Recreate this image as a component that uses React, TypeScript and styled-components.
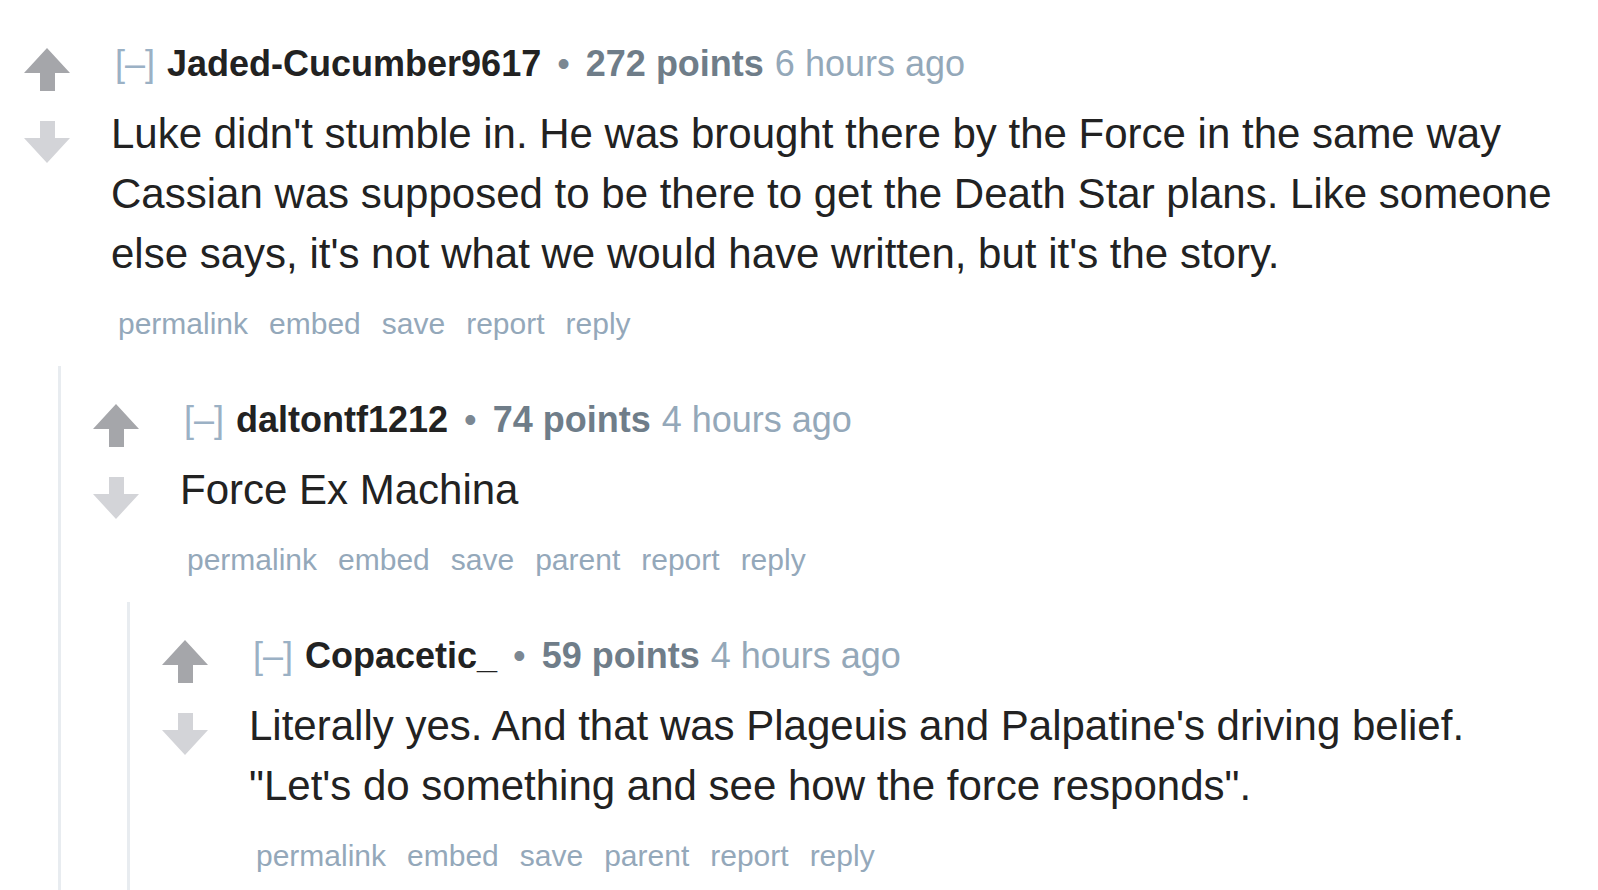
import React from 'react';
import styled, { createGlobalStyle } from 'styled-components';

type CommentData = {
  id: string;
  author: string;
  points: number;
  time: string;
  body: string;
  actions: Array<string>;
  replies?: Array<CommentData>;
};

const comments: Array<CommentData> = [
  {
    id: 'c1',
    author: 'Jaded-Cucumber9617',
    points: 272,
    time: '6 hours ago',
    body: "Luke didn't stumble in. He was brought there by the Force in the same way Cassian was supposed to be there to get the Death Star plans. Like someone else says, it's not what we would have written, but it's the story.",
    actions: ['permalink', 'embed', 'save', 'report', 'reply'],
    replies: [
      {
        id: 'c2',
        author: 'daltontf1212',
        points: 74,
        time: '4 hours ago',
        body: 'Force Ex Machina',
        actions: ['permalink', 'embed', 'save', 'parent', 'report', 'reply'],
        replies: [
          {
            id: 'c3',
            author: 'Copacetic_',
            points: 59,
            time: '4 hours ago',
            body: 'Literally yes. And that was Plageuis and Palpatine\'s driving belief. "Let\'s do something and see how the force responds".',
            actions: ['permalink', 'embed', 'save', 'parent', 'report', 'reply'],
          },
        ],
      },
    ],
  },
];

function Arrow({ dir }: { dir: 'up' | 'down' }) {
  if (dir === 'up') {
    return (
      <ArrowSvg viewBox='0 0 46 43' width={46} height={43}>
        <polygon points='23,0 46,25 31,25 31,43 16,43 16,25 0,25' fill='#a5a6aa' />
      </ArrowSvg>
    );
  }
  return (
    <ArrowSvg viewBox='0 0 46 43' width={46} height={43}>
      <polygon points='16,0 31,0 31,17 46,17 23,42 0,17 16,17' fill='#d3d4d8' />
    </ArrowSvg>
  );
}

function Comment({ data }: { data: CommentData }) {
  return (
    <Thread>
      <Row>
        <VoteColumn>
          <Arrow dir='up' />
          <Arrow dir='down' />
        </VoteColumn>
        <Entry>
          <Tagline>
            <Toggle>[–]</Toggle>
            <Author>{data.author}</Author>
            <Bullet>•</Bullet>
            <Score>{data.points} points</Score>
            <Time>{data.time}</Time>
          </Tagline>
          <Body>{data.body}</Body>
          <Actions>
            {data.actions.map((a) => (
              <ActionLink key={a}>{a}</ActionLink>
            ))}
          </Actions>
        </Entry>
      </Row>
      {data.replies && data.replies.length > 0 && (
        <Children>
          {data.replies.map((r) => (
            <Comment key={r.id} data={r} />
          ))}
        </Children>
      )}
    </Thread>
  );
}

function App() {
  return (
    <>
      <GlobalStyle />
      <Page>
        {comments.map((c) => (
          <Comment key={c.id} data={c} />
        ))}
      </Page>
    </>
  );
}

export default App;

const GlobalStyle = createGlobalStyle`
  html, body {
    margin: 0;
    padding: 0;
    background: #ffffff;
  }

  body {
    font-family: "Liberation Sans", Arial, sans-serif;
    color: #222222;
  }
`;

const Page = styled.div`
  padding: 43px 30px 0 24px;
  height: 890px;
  box-sizing: border-box;
  overflow: hidden;
`;

const Thread = styled.div`
  display: flex;
  flex-direction: column;
`;

const Row = styled.div`
  display: flex;
  align-items: flex-start;
`;

const VoteColumn = styled.div`
  display: flex;
  flex-direction: column;
  gap: 30px;
  width: 46px;
  padding-top: 5px;
  margin-right: 41px;
  flex-shrink: 0;
`;

const ArrowSvg = styled.svg`
  display: block;
`;

const Entry = styled.div`
  flex: 1;
  min-width: 0;
`;

const Tagline = styled.div`
  display: flex;
  align-items: baseline;
  padding-left: 4px;
  font-size: 36px;
  line-height: 42px;
  height: 42px;
  margin-bottom: 19px;
  white-space: nowrap;
`;

const Toggle = styled.span`
  color: #9bb1c5;
  margin-right: 12px;
`;

const Author = styled.span`
  font-weight: bold;
  color: #222222;
`;

const Bullet = styled.span`
  color: #7b8792;
  margin: 0 16px 0 16px;
`;

const Score = styled.span`
  font-weight: bold;
  color: #6f7d89;
  margin-right: 11px;
`;

const Time = styled.span`
  color: #94a8b9;
`;

const Body = styled.div`
  font-size: 42px;
  line-height: 60px;
  color: #222222;
  margin-bottom: 22px;
`;

const Actions = styled.div`
  display: flex;
  padding-left: 7px;
  font-size: 30px;
  line-height: 36px;
`;

const ActionLink = styled.span`
  color: #94a8ba;
  margin-right: 21px;
`;

const Children = styled.div`
  margin-top: 24px;
  margin-left: 34px;
  border-left: 3px solid #e8ecf0;
  padding-left: 32px;
  padding-top: 33px;
  padding-bottom: 200px;
`;
